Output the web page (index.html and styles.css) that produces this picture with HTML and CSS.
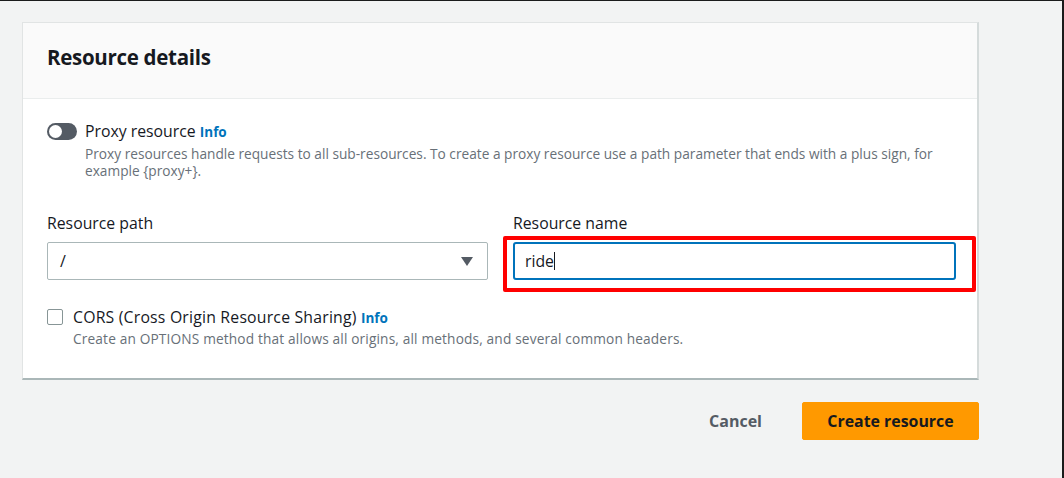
FILE: index.html
```html
<!DOCTYPE html>
<html>
<head>
<meta charset="utf-8">
<link rel="stylesheet" href="styles.css">
</head>
<body>
<div class="frame">
  <section class="card">
    <header class="card-head">
      <h2 class="title">Resource details</h2>
    </header>
    <div class="card-body">
      <div class="toggle-row">
        <span class="toggle"><span class="knob"></span></span>
        <div class="toggle-text">
          <div class="opt-label">Proxy resource <a class="info">Info</a></div>
          <div class="desc">Proxy resources handle requests to all sub-resources. To create a proxy resource use a path parameter that ends with a plus sign, for<br>example {proxy+}.</div>
        </div>
      </div>
      <div class="fields">
        <div class="field">
          <label class="field-label">Resource path</label>
          <div class="select">
            <span class="select-value">/</span>
            <svg class="caret" width="12" height="9" viewBox="0 0 12 9"><path d="M0 0 H12 L6 9 Z" fill="#545b64"/></svg>
          </div>
        </div>
        <div class="field">
          <label class="field-label">Resource name</label>
          <div class="highlight">
            <div class="input"><span>ride</span><span class="cursor"></span></div>
          </div>
        </div>
      </div>
      <div class="check-row">
        <span class="checkbox"></span>
        <div class="check-text">
          <div class="opt-label cors">CORS (Cross Origin Resource Sharing) <a class="info">Info</a></div>
          <div class="desc cors-desc">Create an OPTIONS method that allows all origins, all methods, and several common headers.</div>
        </div>
      </div>
    </div>
  </section>
  <div class="actions">
    <button class="btn-link">Cancel</button>
    <button class="btn-primary">Create resource</button>
  </div>
</div>
</body>
</html>
```
FILE: styles.css
```css
html, body {
  margin: 0;
  padding: 0;
}
body {
  background: #f2f3f3;
  font-family: "Open Sans", "Noto Sans", sans-serif;
  color: #16191f;
  width: 1064px;
  height: 478px;
  overflow: hidden;
}
.frame {
  box-sizing: border-box;
  height: 478px;
  border-top: 1px solid #1b1b1b;
  border-right: 2px solid #1b1b1b;
  padding: 21px 84px 0 22px;
}
.card {
  background: #fff;
  border: 1px solid #e1e4e4;
  border-bottom: 2px solid #aab7b8;
  border-right: 2px solid #d5dbdb;
  box-sizing: border-box;
  width: 957px;
  height: 358px;
}
.card-head {
  background: #fafafa;
  border-bottom: 1px solid #eaeded;
  display: flex;
  align-items: center;
  padding: 0 24px 8px;
  box-sizing: border-box;
  height: 76px;
}
.title {
  margin: 0;
  font-size: 20.5px;
  font-weight: 700;
  color: #16191f;
  letter-spacing: -0.3px;
}
.card-body {
  padding: 23px 21px 0 24px;
}
.toggle-row, .check-row {
  display: flex;
  align-items: flex-start;
}
.toggle {
  width: 30px;
  height: 17px;
  background: #545b64;
  border-radius: 9px;
  margin-top: 1px;
  margin-right: 8px;
  display: flex;
  align-items: center;
  padding-left: 2px;
  box-sizing: border-box;
  flex: none;
}
.knob {
  width: 13px;
  height: 13px;
  background: #fff;
  border-radius: 50%;
}
.opt-label {
  font-size: 15.8px;
  line-height: 18px;
  color: #16191f;
}
.opt-label.cors {
  letter-spacing: 0.2px;
}
.info {
  color: #0073bb;
  font-weight: 700;
  font-size: 13.5px;
  letter-spacing: 0;
}
.desc {
  font-size: 13.7px;
  line-height: 17px;
  color: #687078;
  margin-top: 4px;
  white-space: nowrap;
}
.fields {
  display: grid;
  grid-template-columns: 441px 443px;
  column-gap: 25px;
  margin-top: 35px;
}
.field-label {
  display: block;
  font-size: 15.8px;
  line-height: 18px;
  color: #16191f;
  margin-bottom: 10px;
}
.select {
  box-sizing: border-box;
  height: 38px;
  border: 1px solid #aab7b8;
  border-radius: 2px;
  display: flex;
  align-items: center;
  justify-content: space-between;
  padding: 0 14px 0 12px;
  font-size: 16px;
}
.highlight {
  position: relative;
}
.highlight::before {
  content: "";
  position: absolute;
  left: -10px;
  right: -20px;
  top: -6px;
  bottom: -12px;
  border: 4px solid #ff0000;
  border-radius: 2px;
}
.input {
  position: relative;
  box-sizing: border-box;
  height: 38px;
  border: 2px solid #0073bb;
  border-radius: 3px;
  display: flex;
  align-items: center;
  padding: 0 10px;
  font-size: 15.8px;
  color: #16191f;
}
.cursor {
  width: 1px;
  height: 18px;
  background: #16191f;
}
.check-row {
  margin-top: 28px;
}
.checkbox {
  width: 14px;
  height: 14px;
  border: 1px solid #879596;
  border-radius: 2px;
  margin-top: 1px;
  margin-right: 10px;
  flex: none;
}
.check-text .desc {
  margin-top: 3px;
}
.cors-desc {
  letter-spacing: 0.15px;
}
.actions {
  display: flex;
  justify-content: flex-end;
  align-items: center;
  gap: 40px;
  width: 957px;
  margin-top: 22px;
}
.btn-link {
  background: none;
  border: none;
  font-family: inherit;
  font-size: 16px;
  font-weight: 700;
  color: #545b64;
  padding: 0;
}
.btn-primary {
  font-family: inherit;
  background: #ff9900;
  border: 1px solid #ff9900;
  border-radius: 2px;
  width: 177px;
  height: 38px;
  font-size: 15.9px;
  font-weight: 700;
  color: #16191f;
  padding: 0;
}
```
